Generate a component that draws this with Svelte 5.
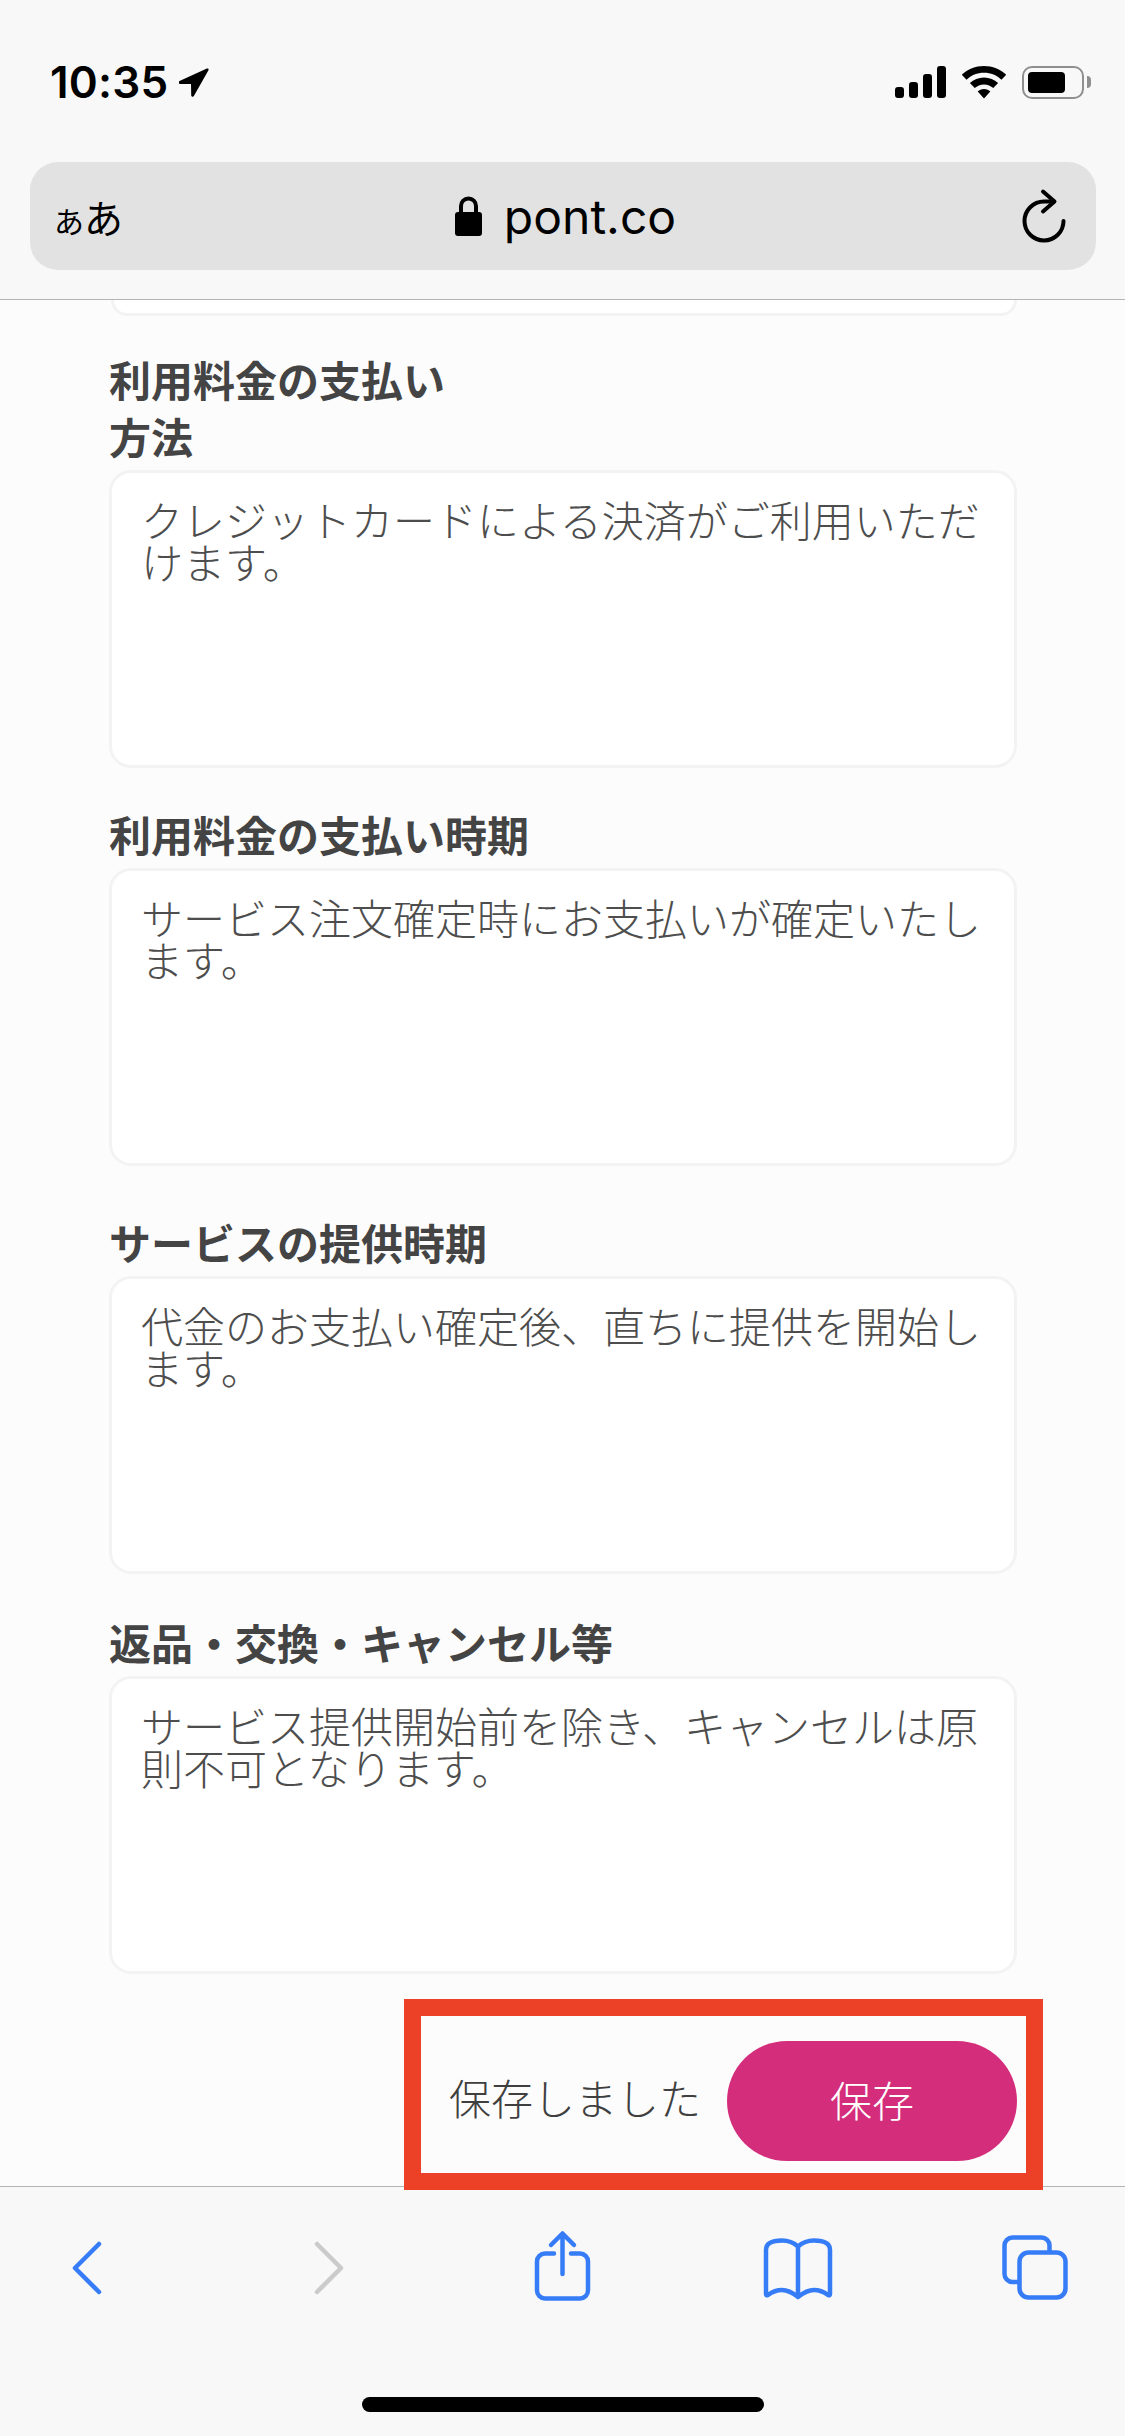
<script>
  const fields = [
    { label: "利用料金の支払い\n方法", value: "クレジットカードによる決済がご利用いただけます。", gap: "first" },
    { label: "利用料金の支払い時期", value: "サービス注文確定時にお支払いが確定いたします。", gap: "normal" },
    { label: "サービスの提供時期", value: "代金のお支払い確定後、直ちに提供を開始します。", gap: "wide" },
    { label: "返品・交換・キャンセル等", value: "サービス提供開始前を除き、キャンセルは原則不可となります。", gap: "last" },
  ];
</script>

<div class="page">
  <header class="browser-head">
    <div class="status">
      <div class="clock">
        <span>10:35</span>
        <svg width="30" height="29" viewBox="3 2 28 27"><path d="M29 2.500 3.500 14.200c-1.400.7-1 2.600.5 2.600l10.200.1.2 10.400c0 1.600 2 1.900 2.600.5L30.500 4c.5-1.100-.4-2-1.500-1.500z" fill="#000" /></svg>
      </div>
      <div class="status-icons">
        <div class="signal">
          <i class="bar1"></i><i class="bar2"></i><i class="bar3"></i><i class="bar4"></i>
        </div>
        <svg width="46" height="33" viewBox="0 0 46 33">
          <path d="M23 0C14.500 0 6.700 3.300.8 8.800l4.700 5C10.100 9.300 16.200 6.800 23 6.800s12.900 2.500 17.500 7l4.700-5C39.300 3.300 31.500 0 23 0z" fill="#000" />
          <path d="M23 11.500c-5.400 0-10.400 2.100-14.100 5.600l4.800 5c2.400-2.300 5.700-3.700 9.300-3.700s6.900 1.400 9.300 3.700l4.800-5c-3.700-3.500-8.700-5.600-14.100-5.600z" fill="#000" />
          <path d="M23 23c-2.500 0-4.700 1-6.300 2.500L23 32.500l6.300-7C27.700 24 25.500 23 23 23z" fill="#000" />
        </svg>
        <div class="battery"><div class="battery-level"></div></div>
      </div>
    </div>
    <div class="url-bar">
      <span class="aa"><small>あ</small>あ</span>
      <div class="host">
        <svg width="27" height="40" viewBox="0 0 27 40">
          <path d="M6 18v-8a7.500 7.500 0 0 1 15 0v8" fill="none" stroke="#000" stroke-width="4" />
          <rect x="0" y="16" width="27" height="24" rx="3" fill="#000" />
        </svg>
        <span>pont.co</span>
      </div>
      <svg class="reload" width="50" height="60" viewBox="0 -4 50 60">
        <path d="M42.500 31a19.500 19.500 0 1 1-19.500-19.500h10" fill="none" stroke="#000" stroke-width="4" stroke-linecap="round" />
        <path d="M22 1.500 33.500 11.500 22 21.500" fill="none" stroke="#000" stroke-width="4" stroke-linecap="round" stroke-linejoin="round" />
      </svg>
    </div>
  </header>

  <main class="content">
    <div class="prev-card"></div>
    {#each fields as field}
      <div class="field field--{field.gap}">
        <label>
          <span class="field-label">{field.label}</span>
          <textarea readonly value={field.value}></textarea>
        </label>
      </div>
    {/each}
    <div class="save-row">
      <div class="save-box">
        <span class="saved">保存しました</span>
        <button class="save">保存</button>
      </div>
    </div>
  </main>

  <footer class="toolbar">
    <div class="tools">
      <svg width="80" height="80" viewBox="0 0 80 80"><path d="M53 18 29 42l24 24" class="ic" /></svg>
      <svg width="80" height="80" viewBox="0 0 80 80"><path d="m34 18 24 24-24 24" class="ic ic--off" /></svg>
      <svg width="80" height="80" viewBox="0 0 80 80">
        <path d="M33 27.500h-9a8 8 0 0 0-8 8v29a8 8 0 0 0 8 8h35a8 8 0 0 0 8-8v-29a8 8 0 0 0-8-8h-9" class="ic" />
        <path d="M41.500 8v40M30 19 41.500 7.500 53 19" class="ic" />
      </svg>
      <svg width="80" height="80" viewBox="0 0 80 80">
        <path d="M40 20.500C35 16 30 14.500 24 14.500 15 14.500 8 17 8 24v44q0 2 2 1c4-3 9-5 14-5 6 0 11 3 16 7 5-4 10-7 16-7 5 0 10 2 14 5q2 1 2-1V24c0-7-7-9.500-16-9.500-6 0-11 1.500-16 6v50" class="ic" />
      </svg>
      <svg width="80" height="80" viewBox="0 0 80 80">
        <path d="M54.500 26v-6.500a8 8 0 0 0-8-8h-29a8 8 0 0 0-8 8V48a8 8 0 0 0 8 8H24" class="ic" />
        <rect x="24.500" y="26.500" width="46" height="45" rx="9" class="ic" />
      </svg>
    </div>
    <div class="home-bar"></div>
  </footer>
</div>

<style>
  :global(body) {
    margin: 0;
  }

  .page {
    width: 1125px;
    height: 2436px;
    display: flex;
    flex-direction: column;
    overflow: hidden;
    background: #fcfcfc;
    font-family: "Noto Sans CJK JP", "Noto Sans", sans-serif;
  }

  .browser-head {
    flex: none;
    height: 300px;
    box-sizing: border-box;
    padding: 63px 29px 0 30px;
    background: #f8f8f8;
    border-bottom: 1px solid #b4b4b4;
  }

  .status {
    height: 99px;
    display: flex;
    justify-content: space-between;
    align-items: flex-start;
    padding: 0 12px 0 20px;
  }

  .clock {
    display: flex;
    align-items: center;
    gap: 11px;
    height: 38px;
    font-family: Inter, sans-serif;
    font-size: 44px;
    font-weight: 600;
    color: #000;
    letter-spacing: 0.2px;
  }

  .status-icons {
    display: flex;
    align-items: center;
    gap: 15px;
    height: 38px;
  }

  .signal {
    display: flex;
    align-items: flex-end;
    gap: 5px;
    height: 32px;
  }

  .signal i {
    display: block;
    width: 9px;
    border-radius: 3px;
    background: #000;
  }

  .bar1 { height: 11px; }
  .bar2 { height: 16px; }
  .bar3 { height: 24px; }
  .bar4 { height: 32px; }

  .battery {
    position: relative;
    box-sizing: border-box;
    width: 62px;
    height: 33px;
    padding: 4px;
    border: 2px solid #8f8f8f;
    border-radius: 10px;
  }

  .battery::after {
    content: "";
    position: absolute;
    top: 8px;
    right: -9px;
    width: 4px;
    height: 12px;
    border-radius: 0 6px 6px 0;
    background: #8f8f8f;
  }

  .battery-level {
    width: 37px;
    height: 21px;
    border-radius: 4px;
    background: #000;
  }

  .url-bar {
    height: 108px;
    display: grid;
    grid-template-columns: 1fr auto 1fr;
    align-items: center;
    padding: 0 25px 0 24px;
    border-radius: 28px;
    background: #e2e2e2;
    color: #000;
  }

  .aa {
    font-size: 39px;
    line-height: 1;
  }

  .aa small {
    font-size: 30px;
  }

  .host {
    display: flex;
    align-items: center;
    gap: 22px;
    margin-left: 6px;
    font-family: Inter, sans-serif;
    font-size: 48px;
  }

  .reload {
    justify-self: end;
    width: 50px;
  }

  .content {
    flex: 1;
    min-height: 0;
    padding: 0 108px 0 109px;
  }

  .prev-card {
    height: 13px;
    margin: 0 0 0 2px;
    background: #fff;
    border: 3px solid #f3f3f3;
    border-top: 0;
    border-radius: 0 0 20px 20px;
  }

  .field--first { margin-top: 34px; }
  .field--normal { margin-top: 37px; }
  .field--wide { margin-top: 47px; }
  .field--last { margin-top: 39px; }

  .field label {
    display: block;
  }

  .field-label {
    display: block;
    font-size: 42px;
    font-weight: 700;
    line-height: 57px;
    color: #444;
    white-space: pre-line;
  }

  textarea {
    display: block;
    box-sizing: border-box;
    width: 100%;
    height: 298px;
    margin: 6px 0 0;
    padding: 25px 30px 0 29px;
    border: 3px solid #f3f3f3;
    border-radius: 22px;
    background: #fff;
    color: #4d4d4d;
    font: 300 42px/42px "Noto Sans CJK JP", sans-serif;
    resize: none;
    outline: none;
    overflow: hidden;
  }

  .save-row {
    display: flex;
    justify-content: flex-end;
    margin: 25px -26px -4px 0;
    position: relative;
    z-index: 1;
  }

  .save-box {
    display: flex;
    align-items: center;
    gap: 26px;
    height: 191px;
    box-sizing: border-box;
    padding: 13px 9px 0 28px;
    border: 17px solid #ec4126;
    background: #fcfcfc;
  }

  .saved {
    padding-bottom: 9px;
    font-size: 42px;
    font-weight: 300;
    color: #3f3f3f;
  }

  .save {
    width: 290px;
    height: 120px;
    padding: 0 0 6px;
    border: 0;
    border-radius: 60px;
    background: #d42d7c;
    color: #fff;
    font: 300 42px "Noto Sans CJK JP", sans-serif;
  }

  .toolbar {
    flex: none;
    height: 250px;
    box-sizing: border-box;
    padding-top: 39px;
    background: #f8f8f8;
    border-top: 1px solid #b4b4b4;
  }

  .tools {
    display: flex;
    justify-content: space-between;
    padding: 0 50px 0 46px;
  }

  .ic {
    fill: none;
    stroke: #377cf7;
    stroke-width: 4.5;
    stroke-linecap: round;
    stroke-linejoin: round;
  }

  .ic--off {
    stroke: #cbcbcb;
  }

  .home-bar {
    width: 402px;
    height: 15px;
    margin: 91px auto 0;
    border-radius: 8px;
    background: #000;
  }
</style>
